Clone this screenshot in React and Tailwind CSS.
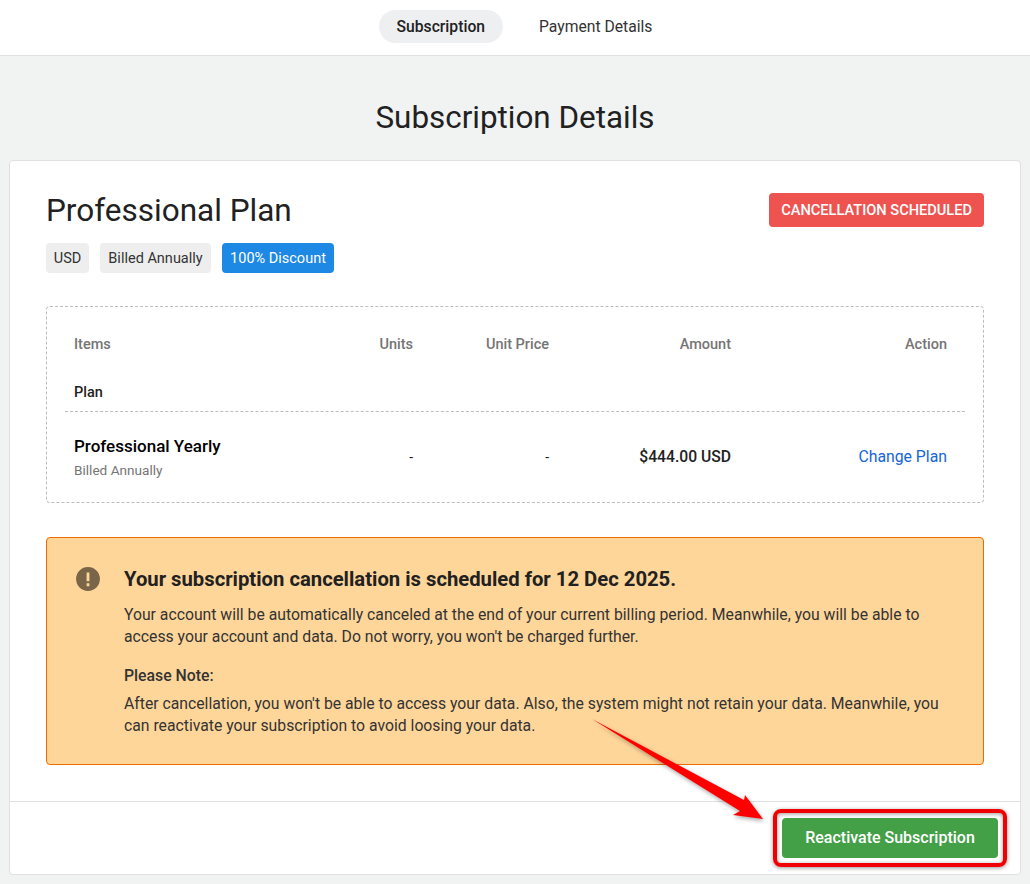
import React from "react";

const Badge = ({ children, className }) => (
    <span className={`h-[30px] pt-px flex items-center justify-center rounded text-[14.5px] ${className}`}>
        {children}
    </span>
);

const App = () => {
    return (
        <div className="relative h-[884px] overflow-hidden bg-[#f1f3f3] text-[#212121] font-['Roboto',sans-serif]">
            {/* top tabs */}
            <div className="h-[56px] bg-white border-b border-[#e0e0e0] flex items-center justify-center gap-[18px] pl-[19px] pb-[2px]">
                <span className="h-[33px] px-[18px] flex items-center rounded-full bg-[#eeeff1] text-[15.7px] font-medium">Subscription</span>
                <span className="h-[33px] px-[18px] flex items-center text-[15.7px] text-[#333333]">Payment Details</span>
            </div>

            <h1 className="h-[104px] flex items-center justify-center text-[31.4px] font-normal leading-none pt-[20px]">Subscription Details</h1>

            {/* card */}
            <div className="mx-[9px] h-[715px] bg-white border border-[#e0e0e0] rounded flex flex-col">
                <div className="flex-1 px-9 pt-8">
                    <div className="flex justify-between items-start">
                        <div>
                            <h2 className="text-[31.5px] font-normal leading-[34px] pt-px">Professional Plan</h2>
                            <div className="flex gap-[11px] mt-[15px]">
                                <Badge className="w-[43px] bg-[#eeeeee] text-[#333333]">USD</Badge>
                                <Badge className="w-[111px] bg-[#eeeeee] text-[#333333]">Billed Annually</Badge>
                                <Badge className="w-[112px] bg-[#1e88e5] text-white">100% Discount</Badge>
                            </div>
                        </div>
                        <span className="h-[34px] px-3 pt-px flex items-center rounded bg-[#ef5350] text-white text-[14.6px] font-medium">CANCELLATION SCHEDULED</span>
                    </div>

                    {/* items table */}
                    <div className="mt-[33px] h-[197px] border border-dashed border-[#bdbdbd] rounded px-[18px]">
                        <div className="h-[105px] border-b border-dashed border-[#bdbdbd] pl-[9px] pr-[18px]">
                            <div className="grid grid-cols-[1fr_100px_136px_182px_216px] h-[76px] items-center text-[14.5px] font-medium text-[#757575] text-right">
                                <span className="text-left">Items</span>
                                <span>Units</span>
                                <span>Unit Price</span>
                                <span>Amount</span>
                                <span>Action</span>
                            </div>
                            <div className="text-[14.5px] font-medium leading-4 mt-[2px]">Plan</div>
                        </div>
                        <div className="grid grid-cols-[1fr_100px_136px_182px_216px] items-center h-[90px] pl-[9px] pr-[18px] text-right text-[#212121]">
                            <div className="text-left">
                                <div className="text-[17px] font-medium text-black leading-5">Professional Yearly</div>
                                <div className="text-[13.6px] text-[#757575] leading-4 mt-[6px]">Billed Annually</div>
                            </div>
                            <span className="text-sm">-</span>
                            <span className="text-sm">-</span>
                            <span className="text-[15.7px] font-medium">$444.00 USD</span>
                            <span className="text-[15.8px] text-[#1565d8]">Change Plan</span>
                        </div>
                    </div>

                    {/* warning */}
                    <div className="mt-[34px] h-[228px] bg-[#ffd699] border border-[#ef6c00] rounded flex pl-[28px] pt-[27px] pr-[28px]">
                        <svg viewBox="0 0 24 24" className="w-[26px] h-[26px] shrink-0 mt-[1px] fill-[#7a6548]">
                            <path d="M12 1a11 11 0 1 0 0 22 11 11 0 0 0 0-22zm-1.3 5h2.6v8h-2.6zm0 10h2.6v2.6h-2.6z" fillRule="evenodd" />
                        </svg>
                        <div className="ml-[23px] flex-1 text-[#333333]">
                            <div className="text-[20.25px] font-bold leading-7 text-[#212121]">Your subscription cancellation is scheduled for 12 Dec 2025.</div>
                            <p className="text-[15.75px] leading-[22px] mt-[11px]">Your account will be automatically canceled at the end of your current billing period. Meanwhile, you will be able to access your account and data. Do not worry, you won't be charged further.</p>
                            <div className="text-[15.8px] font-medium leading-[22px] mt-[17px]">Please Note:</div>
                            <p className="text-[15.75px] leading-[22px] mt-[6px]">After cancellation, you won't be able to access your data. Also, the system might not retain your data. Meanwhile, you can reactivate your subscription to avoid loosing your data.</p>
                        </div>
                    </div>
                </div>

                {/* footer */}
                <div className="h-[73px] border-t border-[#e0e0e0] flex justify-end items-center pr-[22px]">
                    <div className="relative">
                        <button className="w-[216px] h-[40px] bg-[#43a047] rounded text-white text-base font-medium">Reactivate Subscription</button>
                        <div className="absolute -inset-[9px] border-4 border-[#f00000] rounded-lg shadow-[0_1px_4px_rgba(0,0,0,0.4),inset_0_1px_4px_rgba(0,0,0,0.4)]"></div>
                    </div>
                </div>
            </div>

            {/* annotation arrow */}
            <svg className="absolute left-0 top-0 pointer-events-none drop-shadow-[1px_2px_2px_rgba(0,0,0,0.35)]" width="1030" height="884">
                <polygon points="592,719 744,800 745,795 763,819 733,815 740,811" fill="#ff0000" />
            </svg>
        </div>
    );
};

export default App;
